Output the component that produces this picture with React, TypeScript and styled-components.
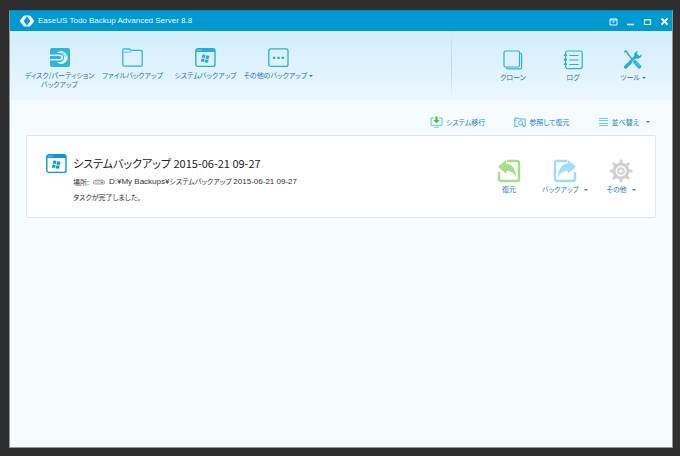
import React from "react";
import styled, { createGlobalStyle } from "styled-components";

const GlobalStyle = createGlobalStyle`
  * { box-sizing: border-box; }
  html, body, #root { height: 100%; margin: 0; }
  body {
    background: #2e2e2e;
    font-family: "Noto Sans CJK JP", sans-serif;
    font-feature-settings: "palt";
    font-size: 7px;
    line-height: 10px;
    color: #444;
  }
  button {
    font: inherit;
    font-feature-settings: inherit;
    color: inherit;
    background: none;
    border: 0;
    padding: 0;
    cursor: pointer;
  }
  svg { display: block; flex: none; }
  h1, h2, p { margin: 0; font-weight: 400; }
`;

const Desktop = styled.div`
  min-height: 100%;
  display: flex;
  padding: 10px 7px 8px 9px;
`;

const Window = styled.div`
  flex: 1;
  min-width: 0;
  display: flex;
  flex-direction: column;
  background: #f5fcff;
  border: 1px solid #8f9699;
  border-top-color: #0b85b4;
`;

const TitleBar = styled.header`
  display: flex;
  align-items: center;
  height: 20px;
  padding: 0 2px 0 10px;
  background: #0099d0;
  color: #e6f8ff;
`;

const AppTitle = styled.h1`
  flex: 1;
  margin-left: 4px;
  font-family: "Liberation Sans", sans-serif;
  font-size: 8px;
  line-height: 12px;
`;

const WindowControls = styled.div`
  display: flex;
  gap: 5px;
`;

const ControlButton = styled.button`
  display: grid;
  place-items: center;
  width: 12px;
  height: 14px;
`;

const Toolbar = styled.nav`
  display: flex;
  height: 69px;
  background: linear-gradient(#d3edfc, #ebf7ff);
`;

const ToolGroup = styled.div<{ $end?: boolean }>`
  display: flex;
  align-items: flex-start;
  padding-top: ${(p) => (p.$end ? "19px" : "17px")};
  padding-left: ${(p) => (p.$end ? "31px" : "12px")};
  padding-right: ${(p) => (p.$end ? "9px" : "0")};
  margin-left: ${(p) => (p.$end ? "auto" : "0")};
  border-left: 1px solid transparent;
  border-image: ${(p) =>
    p.$end ? "linear-gradient(#d3edfc, #b4d6e8 50%, #ebf7ff) 1" : "none"};
`;

const ToolButton = styled.button<{ $wide?: boolean }>`
  display: flex;
  flex-direction: column;
  align-items: center;
  gap: 3px;
  width: ${(p) => (p.$wide ? "73px" : "60px")};
  color: #1f76a8;
  white-space: nowrap;
`;

const ToolLabel = styled.span`
  display: flex;
  align-items: center;
  gap: 2px;
  line-height: 9px;
`;

const Caret = styled.i`
  width: 0;
  height: 0;
  border: 2px solid transparent;
  border-top: 2px solid #2a7fae;
  border-bottom: 0;
`;

const Content = styled.main`
  flex: 1;
  padding: 14px 16px;
`;

const ActionBar = styled.div`
  display: flex;
  justify-content: flex-end;
  gap: 29px;
  height: 16px;
  padding-right: 6px;
`;

const LinkButton = styled.button`
  display: flex;
  align-items: center;
  gap: 3px;
  color: #1f7db3;
  white-space: nowrap;

  ${Caret} { margin-left: 4px; }
`;

const TaskCard = styled.article`
  display: flex;
  align-items: flex-start;
  height: 83px;
  margin-top: 5px;
  padding: 18px 6px 0 19px;
  background: #fff;
  border: 1px solid #dfe5e8;
  border-radius: 2px;
`;

const TaskInfo = styled.div`
  flex: 1;
  margin-left: 6px;
  white-space: nowrap;
`;

const TaskTitle = styled.h2`
  font-size: 11px;
  line-height: 18px;
  color: #222;
`;

const TaskLine = styled.p`
  display: flex;
  align-items: center;
  gap: 4px;
  margin-top: 3px;
  line-height: 12px;
  color: #333;
`;

const Latin = styled.span`
  font-family: "Liberation Sans", sans-serif;
  font-size: 8px;
`;

const TaskActions = styled.div`
  display: flex;
  padding-top: 5px;
`;

const TaskButton = styled.button`
  display: flex;
  flex-direction: column;
  align-items: center;
  gap: 2px;
  width: 56px;
  color: #1f7db3;
  white-space: nowrap;

  ${ToolLabel} { gap: 5px; }
`;

const BLUE = "#2baed6";

const Logo = () => (
  <svg width="14" height="12" viewBox="0 0 14 12">
    <path d="M6.6.4H5Q4.2.4 3.6 1L.5 4.8Q-.2 6 .5 7.2L3.6 11Q4.2 11.6 5 11.6H8L6.6 10 4.3 7.1Q3.4 6 4.3 4.9L6.6 2.2Z" fill="#fff" />
    <path d="M7.4 11.6H9Q9.8 11.6 10.4 11L13.5 7.2Q14.2 6 13.5 4.8L10.4 1Q9.8.4 9 .4H6L7.4 2 9.7 4.9Q10.6 6 9.7 7.1L7.4 9.8Z" fill="#fff" />
  </svg>
);

const DiskIcon = () => (
  <svg width="20" height="20" viewBox="0 0 20 20">
    <rect width="20" height="19" rx="2" fill="#30b4dc" />
    <circle cx="11.3" cy="9.5" r="6.4" fill="#dff3fc" />
    <path d="M12.4 5.4A4.3 4.3 0 0 1 15.6 8.6M12.8 3.6A6.2 6.2 0 0 1 17.4 8.2" stroke="#5cc3e3" fill="none" strokeWidth=".9" />
    <path d="M0 5H10.5Q14 6 14 9.5T10.5 14H0Z" fill="#30b4dc" />
    <path d="M0 6.6H9.5Q13 6.6 13 9.5T9.5 12.4H0Z" fill="#dff3fc" />
    <path d="M0 8H9.4Q11.2 8 11.2 9.5T9.4 11H0Z" fill="#30b4dc" />
  </svg>
);

const FolderIcon = () => (
  <svg width="21" height="20" viewBox="0 0 21 20" fill="none">
    <path d="M.8 2.3Q.8.8 2.3.8H7.3L9.3 2.3H18.7Q20.2 2.3 20.2 3.8V16.7Q20.2 18.2 18.7 18.2H2.3Q.8 18.2.8 16.7Z" stroke={BLUE} strokeWidth="1.2" />
    <path d="M1.5 4.3H8L10 2.8" stroke="#83d0ea" strokeWidth="1.4" />
  </svg>
);

const SystemIcon = ({ solid }: { solid?: boolean }) => {
  const c = solid ? "#079bd0" : BLUE;
  return (
    <svg width="21" height="20" viewBox="0 0 21 20">
      <rect x=".8" y=".8" width="19.2" height="17.6" rx="2" stroke={c} strokeWidth="1.4" fill={solid ? "#fff" : "none"} />
      <path d="M1 1H20V4H1Z" fill={c} />
      <path d="M2.5 2.2H7" stroke="#dff5ff" strokeDasharray="1 1" />
      <path d="M7.4 6.7Q9 6 10.5 7L9.9 10.1Q8.3 9.2 6.7 10ZM11.2 7.3Q13 8.2 14.6 7.4L13.9 10.5Q12.2 11.3 10.6 10.4ZM6.5 10.8Q8.1 10 9.7 10.9L9 14Q7.4 13.1 5.9 13.9ZM10.4 11.2Q12 12.1 13.7 11.3L13 14.4Q11.3 15.2 9.7 14.3Z" fill={c} />
    </svg>
  );
};

const MoreIcon = () => (
  <svg width="21" height="20" viewBox="0 0 21 20">
    <rect x=".8" y=".8" width="19.2" height="17.6" rx="2" stroke={BLUE} strokeWidth="1.3" fill="none" />
    <path d="M5 8.8H7.4V11H5ZM9.3 8.8H11.7V11H9.3ZM13.6 8.8H16V11H13.6Z" fill={BLUE} />
  </svg>
);

const CloneIcon = () => (
  <svg width="20" height="20" viewBox="0 0 20 20" fill="none" stroke={BLUE} strokeWidth="1.2">
    <rect x="1" y="1" width="15.5" height="16" rx="1.5" />
    <path d="M16.8 3Q18.6 3 18.6 4.6V17.4Q18.6 18.9 17 18.9H5Q3.4 18.9 3.4 17.2" />
  </svg>
);

const LogIcon = () => (
  <svg width="20" height="20" viewBox="0 0 20 20" fill="none" stroke={BLUE} strokeWidth="1.2">
    <rect x="2.6" y="1" width="16.6" height="17.6" rx="2" />
    <path d="M6.3 5.5H15.6M6.3 10H15.6M6.3 14.5H15.6" />
    <path d="M.8 5.2H4M.8 9.7H4M.8 14.2H4" strokeWidth="1.8" />
  </svg>
);

const ToolsIcon = () => (
  <svg width="20" height="20" viewBox="0 0 20 20">
    <path d="M2.6 17 14 5.6" stroke={BLUE} strokeWidth="3.4" strokeLinecap="round" />
    <path d="M11 5.2Q11.2 1.6 15.3 1L13.7 3.2 14.2 5.5 16.6 6 18.8 4Q18.8 8.8 13.8 8.8Z" fill={BLUE} />
    <path d="M1.3 2 3 1 5.2 3.6 5 4.6 11 10.8" fill="none" stroke={BLUE} strokeWidth="1.5" />
    <path d="m12 12 4.3 4.6" stroke="#d8effc" strokeWidth="5" strokeLinecap="round" />
    <path d="m12 12 4.3 4.6" stroke={BLUE} strokeWidth="3.8" strokeLinecap="round" />
    <path d="m12 12.7 3.8 4M13 11.7l3.8 4" stroke="#a9dff2" strokeWidth=".5" />
  </svg>
);

const MigrateIcon = () => (
  <svg width="13" height="12" viewBox="0 0 13 12">
    <path d="M4 2H1V9.3H12V2H9M4 11.2H9" fill="none" stroke="#6bc1dd" />
    <path d="M5.4.5H7.6V4H9.5L6.5 7.5 3.5 4H5.4Z" fill="#5ab52f" />
  </svg>
);

const BrowseIcon = () => (
  <svg width="12" height="11" viewBox="0 0 12 11" fill="none" stroke="#4cb6d9">
    <path d="M4 9.5H.8V1H4L5 2H11.2V9.5M1 3.2H3" />
    <circle cx="6.6" cy="5.8" r="2" />
    <path d="m8 7.3 2.6 2.6" strokeWidth="1.3" />
  </svg>
);

const ListIcon = () => (
  <svg width="10" height="10" viewBox="0 0 10 10">
    <path d="M0 1.5H9M0 3.5H9M0 6.5H9M0 8.5H9" stroke="#78cbe3" />
  </svg>
);

const DriveIcon = () => (
  <svg width="12" height="7" viewBox="0 0 12 7">
    <path d="M1 3 2.5.8H9.5L11 3Z" fill="#ddd" />
    <rect x=".5" y="2.5" width="11" height="3.6" rx="1" fill="#d8d8d8" stroke="#a2a2a2" strokeWidth=".8" />
    <path d="M8 4.5H10" stroke="#4e9f42" strokeWidth="1.2" />
  </svg>
);

const ArrowBoxIcon = ({ color, flip }: { color: string; flip?: boolean }) => (
  <svg width="24" height="24" viewBox="0 0 24 24">
    <g transform={flip ? "translate(24 0) scale(-1 1)" : undefined}>
      <path d="M10 2H20Q22 2 22 4V20Q22 22 20 22H4Q2 22 2 20V13" fill="none" stroke={color} strokeWidth="2.4" />
      <path d="M1 7.7 9.3.8V4.5Q18.5 5.7 19 18.3Q16 11.5 9.3 11.7V15Z" fill={color} />
    </g>
  </svg>
);

const GearIcon = () => (
  <svg width="24" height="24" viewBox="0 0 24 24" fill="none" stroke="#d0d0d0">
    <circle cx="12" cy="12" r="7" strokeWidth="3.2" />
    <circle cx="12" cy="12" r="2.8" strokeWidth="2" />
    {[0, 45, 90, 135, 180, 225, 270, 315].map((a) => (
      <path key={a} d="M12 .6V4.5" strokeWidth="2.8" transform={`rotate(${a} 12 12)`} />
    ))}
  </svg>
);

const controls: [string, React.ReactNode][] = [
  ["メニュー", <><path d="M1 2H8V8H1ZM1 3H8" fill="none" stroke="#e2f6ff" /><path d="M3 4.5H6L4.5 6.3Z" fill="#e2f6ff" /></>],
  ["最小化", <path d="M1 7.5H8" stroke="#e2f6ff" strokeWidth="1.6" />],
  ["最大化", <path d="M1.5 2.5H7.5V7.5H1.5ZM1 3H8" fill="none" stroke="#e2f6ff" strokeWidth="1.2" />],
  ["閉じる", <path d="m1.5 1.5 6 6m0-6-6 6" stroke="#fff" strokeWidth="1.8" />],
];

export default function App() {
  return (
    <>
      <GlobalStyle />
      <Desktop lang="ja">
        <Window>
          <TitleBar>
            <Logo />
            <AppTitle>EaseUS Todo Backup Advanced Server 8.8</AppTitle>
            <WindowControls>
              {controls.map(([name, shape]) => (
                <ControlButton key={name} aria-label={name}>
                  <svg width="9" height="9" viewBox="0 0 9 9">{shape}</svg>
                </ControlButton>
              ))}
            </WindowControls>
          </TitleBar>

          <Toolbar>
            <ToolGroup>
              <ToolButton $wide>
                <DiskIcon />
                <ToolLabel>ディスク/パーティション<br />バックアップ</ToolLabel>
              </ToolButton>
              <ToolButton $wide><FolderIcon /><ToolLabel>ファイルバックアップ</ToolLabel></ToolButton>
              <ToolButton $wide><SystemIcon /><ToolLabel>システムバックアップ</ToolLabel></ToolButton>
              <ToolButton $wide><MoreIcon /><ToolLabel>その他のバックアップ<Caret /></ToolLabel></ToolButton>
            </ToolGroup>
            <ToolGroup $end>
              <ToolButton><CloneIcon /><ToolLabel>クローン</ToolLabel></ToolButton>
              <ToolButton><LogIcon /><ToolLabel>ログ</ToolLabel></ToolButton>
              <ToolButton><ToolsIcon /><ToolLabel>ツール<Caret /></ToolLabel></ToolButton>
            </ToolGroup>
          </Toolbar>

          <Content>
            <ActionBar>
              <LinkButton><MigrateIcon />システム移行</LinkButton>
              <LinkButton><BrowseIcon />参照して復元</LinkButton>
              <LinkButton><ListIcon />並べ替え<Caret /></LinkButton>
            </ActionBar>
            <TaskCard>
              <SystemIcon solid />
              <TaskInfo>
                <TaskTitle>システムバックアップ 2015-06-21 09-27</TaskTitle>
                <TaskLine>
                  場所:<DriveIcon />
                  <span>
                    <Latin>D:¥My Backups¥</Latin>システムバックアップ <Latin>2015-06-21 09-27</Latin>
                  </span>
                </TaskLine>
                <TaskLine>タスクが完了しました。</TaskLine>
              </TaskInfo>
              <TaskActions>
                <TaskButton><ArrowBoxIcon color="#a9dc8f" /><ToolLabel>復元</ToolLabel></TaskButton>
                <TaskButton><ArrowBoxIcon color="#a3dcfa" flip /><ToolLabel>バックアップ<Caret /></ToolLabel></TaskButton>
                <TaskButton><GearIcon /><ToolLabel>その他<Caret /></ToolLabel></TaskButton>
              </TaskActions>
            </TaskCard>
          </Content>
        </Window>
      </Desktop>
    </>
  );
}
